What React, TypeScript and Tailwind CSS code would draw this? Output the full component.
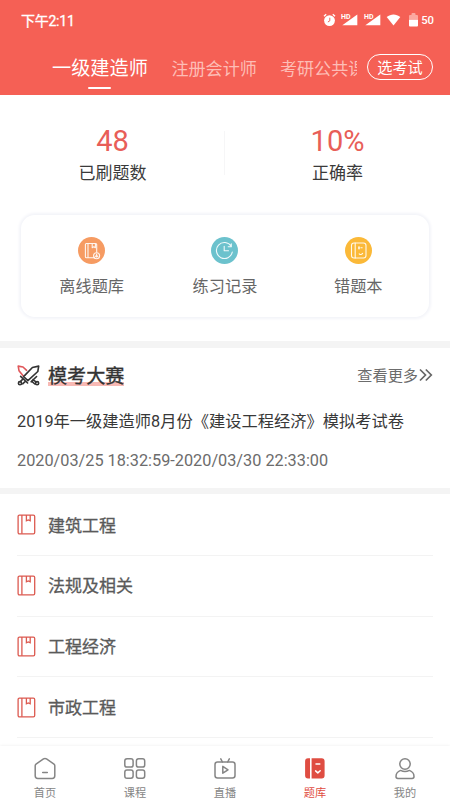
import type { ReactNode } from "react";

function BookIcon() {
  return (
    <svg width="19" height="21" viewBox="0 0 19 21" fill="none" stroke="#dc5a50" strokeWidth="1.3" className="-mt-px shrink-0">
      <rect x="1.1" y="1.1" width="16.6" height="18.8" rx="1.3" />
      <path d="M4.9 1v18.8M9.4 1v5.8l1.9-.9 1.9.9V1" />
    </svg>
  );
}

function SwordsIcon() {
  return (
    <svg width="23" height="21" viewBox="0 0 23 21" fill="none" stroke="#333" strokeWidth="1.6" strokeLinejoin="round" strokeLinecap="round" className="shrink-0">
      <path d="M9.6 5.3 6 2 1.2 1.1l.8 4.6 4.3 5.4" stroke="#e0575a" />
      <path d="M6.6 11.6 15.4 2.5l6.3-1.4-.9 5.4-9.9 9.2z" />
      <path d="m3.6 11.3 7 6.7M5.6 14.4l-2.3 2.2M8 16.7l-2.3 2.1" />
      <circle cx="3" cy="18.2" r="1.6" />
      <path d="m19.6 11.5-5.5 5.3M15.9 14.6l3.1 2.3M14.6 16.2l3.2 2.8" />
      <circle cx="20.1" cy="18.2" r="1.6" />
    </svg>
  );
}

function SignalIcon() {
  return (
    <svg width="17" height="14" viewBox="0 0 17 14" fill="#fff" className="shrink-0 overflow-visible">
      <path d="M16.3 1.5v10.8H1.3z" />
      <text x="0" y="5.6" fontSize="7" fontWeight="700" fontFamily="Roboto, sans-serif" stroke="#f56055" strokeWidth="1" paintOrder="stroke">HD</text>
    </svg>
  );
}

function StatusBar() {
  return (
    <div className="flex h-10 items-center justify-between pr-[16px] pl-[21px] text-white">
      <span className="pt-px text-[14px] leading-none font-normal tracking-[-0.25px] [-webkit-text-stroke:0.3px_#fff]">下午2:11</span>
      <div className="flex items-center">
        <svg width="13" height="14" viewBox="0 0 13 14" className="mr-[5px]">
          <circle cx="6.5" cy="7.6" r="5.4" fill="#fff" />
          <path d="M1 3.2 3.2 1.3M12 3.2 9.8 1.3" stroke="#fff" strokeWidth="1.4" />
          <path d="M6.8 4.7v3.1L4.9 9" stroke="#f56055" strokeWidth="1" fill="none" />
        </svg>
        <span className="mr-[6px] flex"><SignalIcon /></span>
        <span className="mr-[5px] flex"><SignalIcon /></span>
        <svg width="15" height="12" viewBox="0 0 15 12" className="mr-[8px]">
          <path d="M.7 3.1C4.8-.3 10.2-.3 14.3 3.1L7.5 11.5z" fill="#fff" />
        </svg>
        <svg width="9" height="14" viewBox="0 0 9 14" className="mr-[3px]">
          <path d="M0 6.7V3q0-1 1-1h1.5V1q0-1 1-1h2q1 0 1 1v1H8q1 0 1 1v3.7z" fill="#fba79f" />
          <path d="M0 6.7h9v5.8q0 1-1 1H1q-1 0-1-1z" fill="#fff" />
        </svg>
        <span className="pt-px text-[11.3px] leading-none font-medium">50</span>
      </div>
    </div>
  );
}

function Stat({ value, label }: { value: string; label: string }) {
  return (
    <div className="flex w-[226px] flex-col items-center">
      <span className="h-[34px] text-[29px] leading-[34px] text-[#e85e58]">{value}</span>
      <span className="mt-[2px] text-[17px] leading-[26px] text-[#3a3a3a]">{label}</span>
    </div>
  );
}

function Tool({ color, label, children }: { color: string; label: string; children: ReactNode }) {
  return (
    <div className="flex w-[133.3px] flex-col items-center">
      <svg width="27" height="27" viewBox="0 0 27 27" fill="none" stroke="#fff" strokeOpacity="0.9" strokeWidth="1.1" strokeLinecap="round" strokeLinejoin="round">
        <circle cx="13.5" cy="13.5" r="13.5" fill={color} stroke="none" />
        {children}
      </svg>
      <span className="mt-[11px] text-[16.2px] leading-6 text-[#666]">{label}</span>
    </div>
  );
}

function NavItem({ label, active = false, children }: { label: string; active?: boolean; children: ReactNode }) {
  return (
    <div className={active ? "flex flex-1 flex-col items-center text-[#df4d42]" : "flex flex-1 flex-col items-center text-[#858585]"}>
      <svg width="24" height="24" viewBox="0 0 24 24" fill="none" stroke="currentColor" strokeWidth="1.5" strokeLinecap="round" strokeLinejoin="round" className="shrink-0">
        {children}
      </svg>
      <span className="mt-[5px] text-[11.2px] leading-4">{label}</span>
    </div>
  );
}

const subjects = ["建筑工程", "法规及相关", "工程经济", "市政工程"];

export default function App() {
  return (
    <div className="flex h-[800px] w-[450px] flex-col overflow-hidden bg-white font-[Roboto,'Noto_Sans_CJK_SC',sans-serif]">
      <header className="h-[95px] shrink-0 bg-[#f56055]">
        <StatusBar />
        <div className="flex h-[55px] items-start pl-[52px]">
          <div className="flex w-[305px] shrink-0 items-start overflow-hidden pt-px whitespace-nowrap">
            <div className="flex shrink-0 flex-col items-center">
              <span className="text-[19.2px] leading-[56px] text-white">一级建造师</span>
              <span className="-mt-[10px] h-[2px] w-[23px] rounded-full bg-white" />
            </div>
            <span className="ml-[23.5px] shrink-0 text-[17.1px] leading-[56px] text-[#fdbdb6]">注册会计师</span>
            <span className="ml-[23px] shrink-0 text-[17.1px] leading-[56px] text-[#fdbdb6]">考研公共课</span>
          </div>
          <div className="mt-[14px] ml-[10px] flex h-[26px] w-[66px] items-center justify-center rounded-full border-[1.5px] border-white pt-[3px] text-[15.2px] leading-none text-white">选考试</div>
        </div>
      </header>

      <section className="flex h-[120px] shrink-0 items-start pt-[29px]">
        <Stat value="48" label="已刷题数" />
        <span className="-ml-px mt-[7px] h-[44px] w-px bg-[#f6f6f7]" />
        <Stat value="10%" label="正确率" />
      </section>

      <section className="mx-[21px] flex h-[102px] shrink-0 justify-center rounded-[14px] bg-white pt-[22px] shadow-[0_0_3px_2px_#f3f4f9]">
        <Tool color="#f69b62" label="离线题库">
          <path d="M18.7 15V7.5q0-1-1-1H8.4q-1 0-1 1v12.3q0 1 1 1h8M10 6.7v14M14.2 6.7v4l1.6-1 1.6 1v-4" />
          <circle cx="18.6" cy="18.7" r="3" />
          <path d="M18.6 17v3m-1.2-1 1.2 1 1.2-1" />
        </Tool>
        <Tool color="#6cc2cd" label="练习记录">
          <path d="M20.2 9.2A8 8 0 1 0 21.3 15M20.3 6.7v3.1h-3.1M13.2 9.2v4.5h4.3" />
        </Tool>
        <Tool color="#fbb938" label="错题本">
          <rect x="6.5" y="6" width="14.5" height="15" rx="2.5" />
          <path d="M10.2 6v15M15.9 10.8h1.3M14.2 16.8q1.7 1.6 3.4-.4" />
          <path d="M14 10v1.6" strokeWidth="1.7" />
        </Tool>
      </section>

      <div className="mt-[24px] h-[6.5px] shrink-0 bg-[#f4f4f4]" />

      <section className="h-[140px] shrink-0 px-[17px]">
        <div className="flex h-[55px] items-center">
          <SwordsIcon />
          <h2 className="mt-[3px] ml-[8px] bg-[linear-gradient(#f8b9b4,#f8b9b4)] bg-[length:100%_4px] bg-[position:0_19px] bg-no-repeat text-[19.1px] leading-7 font-normal text-[#333] [-webkit-text-stroke:0.35px_#333]">模考大赛</h2>
          <div className="ml-auto flex items-center pt-[2px] text-[15.2px] text-[#6c6c6c]">
            查看更多
            <svg width="15" height="14" viewBox="0 0 15 14" fill="none" stroke="#666" strokeWidth="1.7" className="-mt-[2px]">
              <path d="M2 1.5 7.5 7 2 12.5M7.8 1.5 13.3 7l-5.5 5.5" />
            </svg>
          </div>
        </div>
        <p className="mt-[7px] text-[16.25px] leading-6 whitespace-nowrap text-[#383838]">2019年一级建造师8月份《建设工程经济》模拟考试卷</p>
        <p className="mt-[15px] text-[16.27px] leading-6 whitespace-nowrap text-[#6c6c6c]">2020/03/25 18:32:59-2020/03/30 22:33:00</p>
      </section>

      <div className="h-[6.5px] shrink-0 bg-[#f4f4f4]" />

      <ul className="h-[252px] shrink-0 overflow-hidden px-[17px] pt-px">
        {subjects.map((subject) => (
          <li key={subject} className="flex h-[60.8px] items-center border-b border-[#f3f3f3] pt-px">
            <BookIcon />
            <span className="ml-[12px] pt-[2px] text-[17px] font-normal text-[#5a5a5a] [-webkit-text-stroke:0.3px_#5a5a5a]">{subject}</span>
          </li>
        ))}
      </ul>

      <nav className="flex h-[54px] shrink-0 bg-white pt-[10.5px] shadow-[0_0_3px_#ececec]">
        <NavItem label="首页">
          <path d="M2.2 8.7q0-1 .8-1.6l7.5-5.2q1.5-1 3 0L21 7.1q.8.6.8 1.6v10.1q0 2.6-2.6 2.6H4.8q-2.6 0-2.6-2.6zM9.7 15.6h4.6" />
        </NavItem>
        <NavItem label="课程">
          <rect x="1.8" y="1.8" width="8.3" height="8.3" rx="2.2" />
          <rect x="13.4" y="1.8" width="8.3" height="8.3" rx="2.2" />
          <rect x="1.8" y="13" width="8.3" height="8.3" rx="2.2" />
          <rect x="13.4" y="13" width="8.3" height="8.3" rx="2.2" />
        </NavItem>
        <NavItem label="直播">
          <rect x="2" y="5" width="20" height="16" rx="2.5" />
          <path d="M7.8 1.8 9.4 5M16.3 1.8 14.7 5M9.8 9.4v6.8l5.2-3.4z" />
        </NavItem>
        <NavItem label="题库" active>
          <path d="M7 1.3v20.2H5q-2.9 0-2.9-2.9V4.2q0-2.9 2.9-2.9zM8.6 1.3h10.1q2.9 0 2.9 2.9v14.4q0 2.9-2.9 2.9H8.6z" fill="currentColor" stroke="none" />
          <path d="M13 6.9h3.8M12.6 13.9l2.2 2 2.4-2.2" stroke="#fff" />
        </NavItem>
        <NavItem label="我的">
          <circle cx="12" cy="7" r="5.2" />
          <path d="M3 19.5q0-4.4 4.6-6.1 4.4 2.2 8.8 0 4.6 1.7 4.6 6.1 0 1.9-1.9 1.9H4.9Q3 21.4 3 19.5z" />
        </NavItem>
      </nav>
    </div>
  );
}
